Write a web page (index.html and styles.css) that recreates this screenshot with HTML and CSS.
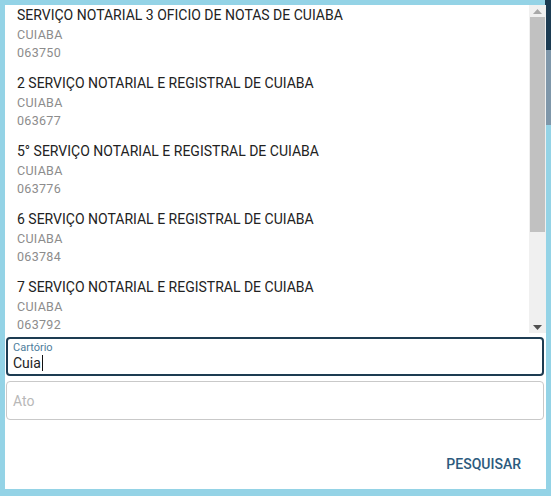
FILE: index.html
```html
<!DOCTYPE html>
<html lang="pt-BR">
<head>
  <meta charset="UTF-8">
  <meta name="viewport" content="width=device-width, initial-scale=1.0">
  <title>Pesquisar Cartório</title>
  <link rel="stylesheet" href="styles.css">
</head>
<body>

  <div class="dialog">
    <!-- Sugestões do autocomplete -->
    <div class="suggestions">
      <ul class="option-list">
        <li class="option">
          <div class="option-title">SERVIÇO NOTARIAL 3 OFICIO DE NOTAS DE CUIABA</div>
          <div class="option-sub">CUIABA</div>
          <div class="option-sub">063750</div>
        </li>
        <li class="option">
          <div class="option-title">2 SERVIÇO NOTARIAL E REGISTRAL DE CUIABA</div>
          <div class="option-sub">CUIABA</div>
          <div class="option-sub">063677</div>
        </li>
        <li class="option">
          <div class="option-title">5° SERVIÇO NOTARIAL E REGISTRAL DE CUIABA</div>
          <div class="option-sub">CUIABA</div>
          <div class="option-sub">063776</div>
        </li>
        <li class="option">
          <div class="option-title">6 SERVIÇO NOTARIAL E REGISTRAL DE CUIABA</div>
          <div class="option-sub">CUIABA</div>
          <div class="option-sub">063784</div>
        </li>
        <li class="option">
          <div class="option-title">7 SERVIÇO NOTARIAL E REGISTRAL DE CUIABA</div>
          <div class="option-sub">CUIABA</div>
          <div class="option-sub">063792</div>
        </li>
      </ul>

      <!-- Barra de rolagem -->
      <div class="scrollbar">
        <div class="scroll-btn">
          <svg width="9" height="5" viewBox="0 0 9 5"><path d="M0 5 L4.5 0 L9 5 Z" fill="#a8a8a8"/></svg>
        </div>
        <div class="scroll-track">
          <div class="scroll-thumb"></div>
        </div>
        <div class="scroll-btn">
          <svg width="9" height="5" viewBox="0 0 9 5"><path d="M0 0 L9 0 L4.5 5 Z" fill="#505050"/></svg>
        </div>
      </div>
    </div>

    <!-- Campos -->
    <div class="field field-focused">
      <span class="field-label">Cartório</span>
      <span class="field-value">Cuia<span class="caret"></span></span>
    </div>
    <div class="field field-empty">
      <span class="placeholder">Ato</span>
    </div>

    <div class="actions">
      <button type="button" class="btn-search">PESQUISAR</button>
    </div>
  </div>

</body>
</html>
```

FILE: styles.css
```css
body {
  margin: 0;
  width: 551px;
  height: 496px;
  overflow: hidden;
  font-family: Roboto, "Liberation Sans", sans-serif;
  background:
    linear-gradient(#1c3b52, #1c3b52) right top / 6px 50px no-repeat,
    linear-gradient(#7f97aa, #7f97aa) right 0 top 50px / 6px 75px no-repeat,
    #94d3e6;
}
.dialog {
  margin: 5px 5px 0 5px;
  height: 484px;
  background: #fff;
  display: flex;
  flex-direction: column;
}
.suggestions {
  display: flex;
  height: 328px;
  flex-shrink: 0;
  background: #fff;
}
.option-list {
  flex: 1;
  list-style: none;
  margin: 0;
  padding: 0;
  overflow: hidden;
}
.option {
  padding: 1px 0 11px 12px;
}
.option-title {
  font-size: 14px;
  line-height: 19px;
  margin-bottom: 1px;
  color: #222;
}
.option-sub {
  font-size: 12.5px;
  line-height: 18px;
  letter-spacing: 0.3px;
  color: #8c8c8c;
}
.scrollbar {
  width: 17px;
  display: flex;
  flex-direction: column;
  background: #f0f0f0;
}
.scroll-btn {
  height: 12px;
  display: flex;
  align-items: center;
  justify-content: center;
}
.scroll-track {
  flex: 1;
  padding: 0 1px;
}
.scroll-thumb {
  height: 215px;
  background: #c1c1c1;
}
.field {
  margin: 4px 2px 0 1px;
  height: 39px;
  box-sizing: border-box;
  border-radius: 4px;
  display: flex;
  flex-direction: column;
}
.field-focused {
  border: 2px solid #1d3c52;
  padding: 3px 6px 0 5px;
}
.field-label {
  font-size: 11px;
  line-height: 12px;
  color: #4e7d9c;
}
.field-value {
  font-size: 14px;
  line-height: 18px;
  color: #222;
}
.caret {
  display: inline-block;
  width: 1px;
  height: 16px;
  background: #111;
  vertical-align: -3px;
  margin-left: 1px;
}
.field-empty {
  margin-top: 5px;
  border: 1px solid #c9c9c9;
  padding: 0 6px;
  justify-content: center;
}
.placeholder {
  font-size: 14px;
  line-height: 18px;
  color: #b8b8b8;
}
.actions {
  display: flex;
  justify-content: flex-end;
  padding: 28px 9px 0 0;
}
.btn-search {
  background: none;
  border: none;
  padding: 8px 16px;
  font-family: Roboto, "Liberation Sans", sans-serif;
  font-size: 14px;
  font-weight: 500;
  color: #2c5a7d;
  cursor: pointer;
}
```
